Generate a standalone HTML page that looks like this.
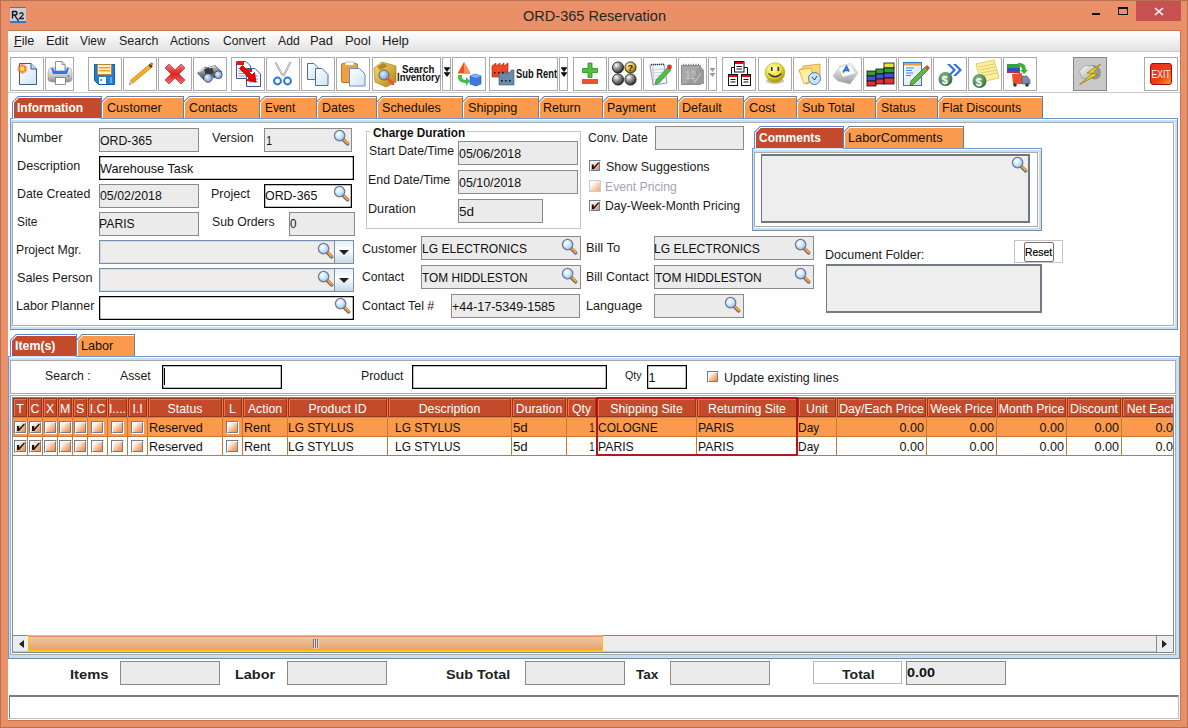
<!DOCTYPE html><html><head><meta charset="utf-8"><style>
*{margin:0;padding:0;box-sizing:border-box}
html,body{width:1188px;height:728px;overflow:hidden;background:#E99069;font-family:"Liberation Sans",sans-serif;font-size:12px;color:#000}
.a{position:absolute}
.t{position:absolute;white-space:nowrap;line-height:1}
.tb{position:absolute;top:57px;height:34px;border:1px solid #ABABAB;background:#fff}
.tab{position:absolute;background:#FB9A4C;border:1px solid #7196CF;border-bottom:none;color:#000;white-space:nowrap;clip-path:polygon(5px 0,100% 0,100% 100%,0 100%,0 5px)}
.tab.sel{background:#C34B2C;color:#fff}
.hc{position:absolute;background:#C34B2C;border:1px solid #F0713F;border-right-color:#9A3A20;border-bottom-color:#9A3A20}
.cb{position:absolute;width:12px;height:12px;border:1px solid #5E6D80;border-right-color:#8C9AAB;border-bottom-color:#8C9AAB;background:linear-gradient(135deg,#FFFFFF 0%,#FCE3CF 35%,#F3A46A 100%)}
.cbd{border-color:#B9CDE6;background:linear-gradient(135deg,#FFFFFF 0%,#FBE6D6 35%,#F2B48A 100%)}
</style></head><body>
<div class="a" style="left:0px;top:0px;width:1188px;height:728px;background:#E99069;border:1px solid #B9704F"></div>
<div class="t" style="left:522.73px;top:8.91px;font-size:14.8px;color:#262626;transform:scaleX(0.9824);transform-origin:0.67px 0;">ORD-365 Reservation</div>
<div class="a" style="left:1092px;top:13px;width:8px;height:2px;background:#111"></div>
<div class="a" style="left:1118px;top:7px;width:10px;height:8px;border:1px solid #111;border-top-width:2px"></div>
<div class="a" style="left:1136px;top:1px;width:45px;height:20px;background:#C75050"></div>
<svg class="a" style="left:1154px;top:7px" width="10" height="9"><path d="M1 1L9 8M9 1L1 8" stroke="#fff" stroke-width="1.6"/></svg>
<div class="a" style="left:10px;top:7px;width:16px;height:16px;background:linear-gradient(#3A74C6 0,#3A74C6 1px,#C9CED6 1px,#C9CED6 14px,#3A74C6 14px)"></div>
<svg class="a" style="left:10px;top:7px" width="16" height="16" viewBox="0 0 16 16"><path d="M2.5 4V11.5M2.5 4.5H5Q7 4.5 7 6.3Q7 8 5 8H2.5M4.5 8L8.5 14" stroke="#111" stroke-width="1.3" fill="none"/><path d="M9.5 7Q10.5 5.5 12 5.8Q13.6 6.3 12.8 8.2L9.5 11.5H14" stroke="#222" stroke-width="1.3" fill="none"/></svg>
<div class="a" style="left:8px;top:30px;width:1173px;height:691px;background:#fff;border:1px solid #C8774F;border-left:none"></div>
<div class="a" style="left:8px;top:31px;width:1172px;height:20px;background:linear-gradient(#FFFFFF,#E2E2E2)"></div>
<div class="a" style="left:8px;top:51px;width:1172px;height:1px;background:#CACACA"></div>
<div class="t" style="left:13.84px;top:35.44px;font-size:12.0px;color:#1a1a1a;transform:scaleX(1.0550);transform-origin:0.96px 0;"><u>F</u>ile</div>
<div class="t" style="left:46.04px;top:35.44px;font-size:12.0px;color:#1a1a1a;transform:scaleX(1.0805);transform-origin:0.96px 0;">Edit</div>
<div class="t" style="left:79.84px;top:35.44px;font-size:12.0px;color:#1a1a1a;transform:scaleX(0.9868);transform-origin:0.06px 0;">View</div>
<div class="t" style="left:118.56px;top:35.44px;font-size:12.0px;color:#1a1a1a;transform:scaleX(1.0393);transform-origin:0.54px 0;">Search</div>
<div class="t" style="left:170.00px;top:35.44px;font-size:12.0px;color:#1a1a1a;transform:scaleX(1.0067);transform-origin:0.00px 0;">Actions</div>
<div class="t" style="left:222.70px;top:35.44px;font-size:12.0px;color:#1a1a1a;transform:scaleX(1.0087);transform-origin:0.60px 0;">Convert</div>
<div class="t" style="left:277.70px;top:35.44px;font-size:12.0px;color:#1a1a1a;transform:scaleX(1.0155);transform-origin:0.00px 0;">Add</div>
<div class="t" style="left:310.04px;top:35.44px;font-size:12.0px;color:#1a1a1a;transform:scaleX(1.0805);transform-origin:0.96px 0;">Pad</div>
<div class="t" style="left:345.34px;top:35.44px;font-size:12.0px;color:#1a1a1a;transform:scaleX(1.0782);transform-origin:0.96px 0;">Pool</div>
<div class="t" style="left:381.74px;top:35.44px;font-size:12.0px;color:#1a1a1a;transform:scaleX(1.0939);transform-origin:0.96px 0;">Help</div>
<div class="tb" style="left:10px;width:34px;"></div>
<div class="tb" style="left:45px;width:29px;"></div>
<div class="tb" style="left:88px;width:34px;"></div>
<div class="tb" style="left:123px;width:34px;"></div>
<div class="tb" style="left:158px;width:34px;"></div>
<div class="tb" style="left:193px;width:34px;"></div>
<div class="tb" style="left:231px;width:34px;"></div>
<div class="tb" style="left:266px;width:34px;"></div>
<div class="tb" style="left:301px;width:34px;"></div>
<div class="tb" style="left:336px;width:34px;"></div>
<div class="tb" style="left:372px;width:69px;"></div>
<div class="tb" style="left:442px;width:9px;"></div>
<div class="tb" style="left:452px;width:34px;"></div>
<div class="tb" style="left:489px;width:69px;"></div>
<div class="tb" style="left:559px;width:9px;"></div>
<div class="tb" style="left:573px;width:34px;"></div>
<div class="tb" style="left:608px;width:34px;"></div>
<div class="tb" style="left:643px;width:34px;"></div>
<div class="tb" style="left:678px;width:29px;"></div>
<div class="tb" style="left:708px;width:9px;"></div>
<div class="tb" style="left:722px;width:34px;"></div>
<div class="tb" style="left:758px;width:34px;"></div>
<div class="tb" style="left:793px;width:34px;"></div>
<div class="tb" style="left:828px;width:34px;"></div>
<div class="tb" style="left:863px;width:34px;"></div>
<div class="tb" style="left:898px;width:34px;"></div>
<div class="tb" style="left:933px;width:34px;"></div>
<div class="tb" style="left:968px;width:34px;"></div>
<div class="tb" style="left:1003px;width:34px;"></div>
<div class="tb" style="left:1073px;width:34px;background:#C9C9C9;border-color:#858585;"></div>
<div class="tb" style="left:1144px;width:34px;"></div>

<svg class="a" style="left:0;top:50px" width="1188" height="45" viewBox="0 50 1188 45">
<defs>
<linearGradient id="pg" x1="0" y1="0" x2="1" y2="1"><stop offset="0" stop-color="#FFFFFF"/><stop offset="1" stop-color="#CFE3F5"/></linearGradient>
<radialGradient id="star" cx="0.5" cy="0.5" r="0.5"><stop offset="0" stop-color="#FFE860"/><stop offset="0.45" stop-color="#FF9A20"/><stop offset="1" stop-color="#FF3010" stop-opacity="0.2"/></radialGradient>
<linearGradient id="prn" x1="0" y1="0" x2="0" y2="1"><stop offset="0" stop-color="#FAFAFA"/><stop offset="0.6" stop-color="#C8C8C8"/><stop offset="1" stop-color="#8A8A8A"/></linearGradient>
<linearGradient id="redx" x1="0" y1="0" x2="0" y2="1"><stop offset="0" stop-color="#F08080"/><stop offset="0.5" stop-color="#E02020"/><stop offset="1" stop-color="#F07070"/></linearGradient>
<radialGradient id="ball" cx="0.35" cy="0.3" r="0.7"><stop offset="0" stop-color="#FFFFFF"/><stop offset="0.4" stop-color="#A0A0A0"/><stop offset="1" stop-color="#303030"/></radialGradient>
<radialGradient id="yball" cx="0.35" cy="0.3" r="0.7"><stop offset="0" stop-color="#FFFBD0"/><stop offset="0.5" stop-color="#F2C230"/><stop offset="1" stop-color="#8A6A10"/></radialGradient>
<radialGradient id="smile" cx="0.4" cy="0.3" r="0.75"><stop offset="0" stop-color="#FFFFC0"/><stop offset="0.5" stop-color="#F0E040"/><stop offset="1" stop-color="#A08A00"/></radialGradient>
<radialGradient id="lens" cx="0.4" cy="0.4" r="0.6"><stop offset="0" stop-color="#E0F4FF"/><stop offset="1" stop-color="#6A9AD8"/></radialGradient>
<linearGradient id="bino" x1="0" y1="0" x2="0" y2="1"><stop offset="0" stop-color="#C8C8C8"/><stop offset="1" stop-color="#404040"/></linearGradient>
<linearGradient id="gold" x1="0" y1="0" x2="1" y2="1"><stop offset="0" stop-color="#FFE070"/><stop offset="1" stop-color="#B08010"/></linearGradient>
<linearGradient id="exit" x1="0" y1="0" x2="1" y2="1"><stop offset="0" stop-color="#E83020"/><stop offset="0.6" stop-color="#F04010"/><stop offset="1" stop-color="#FFA030"/></linearGradient>
<linearGradient id="key" x1="0" y1="0" x2="0" y2="1"><stop offset="0" stop-color="#FFFFFF"/><stop offset="1" stop-color="#9A9A9A"/></linearGradient>
<radialGradient id="dollar" cx="0.4" cy="0.35" r="0.7"><stop offset="0" stop-color="#90C090"/><stop offset="1" stop-color="#2E6A3A"/></radialGradient>
<linearGradient id="cloud" x1="0" y1="0" x2="1" y2="1"><stop offset="0" stop-color="#FFFFFF"/><stop offset="1" stop-color="#A0A0A0"/></linearGradient>
</defs>
<!-- 1 new -->
<path d="M19.5 63.5H31L36.5 69V84.5H19.5Z" fill="url(#pg)" stroke="#3A5A90"/>
<path d="M31 63.5V69H36.5" fill="#BFD8EE" stroke="#3A5A90"/>
<circle cx="22.3" cy="68.8" r="5.2" fill="url(#star)"/>
<path d="M22.3 63.8L23.3 67.3L26.8 66.3L24.3 68.8L26.8 71.3L23.3 70.3L22.3 73.8L21.3 70.3L17.8 71.3L20.3 68.8L17.8 66.3L21.3 67.3Z" fill="#FF5A1A" opacity="0.8"/>
<circle cx="22.3" cy="68.8" r="2.2" fill="#FFF060"/>
<!-- 2 printer -->
<path d="M48 72Q48 68 52 67H68Q72 68 72 72V79Q72 82 67 82H53Q48 82 48 79Z" fill="url(#prn)" stroke="#8A8A8A" stroke-width="0.5"/>
<path d="M51 68H69L67 74H53Z" fill="#2E78E8"/>
<path d="M53 68H67L66 71H54Z" fill="#9EC4F8"/>
<path d="M55.5 61.5H62L65 64.5V71H55.5Z" fill="#fff" stroke="#777" stroke-width="0.8"/>
<path d="M62 61.5V64.5H65" fill="none" stroke="#777" stroke-width="0.8"/>
<rect x="55.5" y="77.5" width="10" height="7" fill="#fff" stroke="#777" stroke-width="0.8"/>
<circle cx="68.5" cy="76" r="1" fill="#20B040"/>
<!-- 3 save -->
<path d="M94 64H115V84H98L94 80Z" fill="#1E7FD6"/>
<path d="M94.5 64.5H114.5V84.5H98.5L94.5 80.5Z" fill="none" stroke="#1060B0"/>
<rect x="97.5" y="64.5" width="14" height="10" fill="#FFF3C8" stroke="#C08040"/>
<rect x="99" y="67" width="11" height="1.5" fill="#F0A030"/>
<rect x="99" y="70" width="11" height="1.5" fill="#F0A030"/>
<rect x="99" y="77" width="7" height="7" fill="#fff"/>
<rect x="100.5" y="79" width="1.5" height="2" fill="#1E7FD6"/>
<rect x="110" y="77" width="2" height="6" fill="#60B0F0"/>
<!-- 4 pencil -->
<path d="M131 80L150 64L152.5 66.5L133.5 82.5Z" fill="#F8B020" stroke="#C07010" stroke-width="0.7"/>
<path d="M131 80L133.5 82.5L129 85Z" fill="#F0D0A0" stroke="#806040" stroke-width="0.5"/>
<path d="M148.5 65.2L150 64L152.5 66.5L151 67.8Z" fill="#303030"/>
<circle cx="151.5" cy="64" r="1.6" fill="#F06030"/>
<path d="M131 80L128 84L136 70Z" fill="#ccc" opacity="0.35"/>
<!-- 5 red x -->
<path d="M165 68L169 64L175 70L181 64L185 68L179 74L185 80L181 84L175 78L169 84L165 80L171 74Z" fill="url(#redx)" stroke="#C04040" stroke-width="0.8"/>
<!-- 6 binoculars -->
<path d="M197.5 73L205 67L211 69.5L204 80Z" fill="url(#bino)" stroke="#333" stroke-width="0.6"/>
<path d="M207 68L215 65.5L222 72L214 78Z" fill="url(#bino)" stroke="#333" stroke-width="0.6"/>
<path d="M204 69L212 67L214 73L206 76Z" fill="#3A3A3A"/>
<path d="M199 72L205 68" stroke="#E8E8E8" stroke-width="1.2"/>
<path d="M209 68L215 66.5" stroke="#E8E8E8" stroke-width="1.2"/>
<circle cx="208" cy="78" r="4.3" fill="url(#lens)" stroke="#444" stroke-width="0.8"/>
<circle cx="218.3" cy="74.8" r="3.9" fill="url(#lens)" stroke="#444" stroke-width="0.8"/>
<!-- 7 doc arrow -->
<path d="M236.5 61.5H246L250.5 66V78.5H236.5Z" fill="#fff" stroke="#3C58A0"/>
<rect x="237" y="62" width="7" height="3" fill="#F01010"/>
<path d="M238.5 68.5H245M238.5 71H246M238.5 73.5H244M238.5 76H246" stroke="#5C78C0" stroke-width="0.8"/>
<path d="M246.5 68.5H255L260.5 74V86.5H246.5Z" fill="#fff" stroke="#3C58A0"/>
<rect x="247" y="69" width="5" height="3" fill="#F01010"/>
<path d="M249 76H258M249 79H258M249 82H258" stroke="#5C78C0" stroke-width="0.8"/>
<path d="M239.5 68.5L242.5 65.5L252 75L254.5 72.5L256 82L246.5 80.5L249 78Z" fill="#F00000" stroke="#8A0000" stroke-width="0.7"/>
<!-- 8 scissors -->
<path d="M275.5 62.5L283 76M290.5 62L283.5 76" fill="none" stroke="#9A9A9A" stroke-width="2"/>
<path d="M275.5 62.5L283 76M290.5 62L283.5 76" fill="none" stroke="#F8F8F8" stroke-width="0.7"/>
<circle cx="277.5" cy="81" r="3.4" fill="none" stroke="#2A78D8" stroke-width="2"/>
<circle cx="287.5" cy="81" r="3.4" fill="none" stroke="#2A78D8" stroke-width="2"/>
<!-- 9 copy -->
<path d="M307.5 63.5H314L318 67.5V79.5H307.5Z" fill="url(#pg)" stroke="#4A6AA8"/>
<path d="M315.5 68.5H322L328 74.5V85.5H315.5Z" fill="url(#pg)" stroke="#4A6AA8"/>
<!-- 10 paste -->
<rect x="341.5" y="63.5" width="16" height="19" rx="1.5" fill="#F0A040" stroke="#C07820"/>
<rect x="345" y="62" width="9" height="3.5" fill="#fff" stroke="#999" stroke-width="0.6"/>
<path d="M349.5 68.5H359.5L365 74V86H349.5Z" fill="url(#pg)" stroke="#6A8AC8"/>
<!-- 11 search inventory -->
<path d="M374 68L382 62L396 66V82L386 87L375 82Z" fill="url(#gold)" stroke="#A07010" stroke-width="0.6"/>
<path d="M377 67L383 63L388 66L380 70Z" fill="#8A6010" opacity="0.6"/>
<circle cx="384" cy="75" r="5" fill="url(#lens)" stroke="#666" stroke-width="1"/>
<path d="M387.5 78.5L393 84" stroke="#E85050" stroke-width="2.5" stroke-linecap="round"/>
<text x="402" y="72.5" font-family="Liberation Sans" font-weight="bold" font-size="11" fill="#111" textLength="32.3" lengthAdjust="spacingAndGlyphs">Search</text>
<text x="397" y="81.3" font-family="Liberation Sans" font-weight="bold" font-size="11" fill="#111" textLength="43" lengthAdjust="spacingAndGlyphs">Inventory</text>
<!-- dropdowns -->
<path d="M444 68H450L447 72ZM444 73H450L447 77Z" fill="#111"/>
<path d="M444 67.5H450M444 72.5H450" stroke="#111" stroke-width="0.8"/>
<path d="M561 68H567L564 72ZM561 73H567L564 77Z" fill="#111"/>
<path d="M561 67.5H567M561 72.5H567" stroke="#111" stroke-width="0.8"/>
<path d="M709.5 68H715.5L712.5 72ZM709.5 73H715.5L712.5 77Z" fill="#999"/>
<!-- 13 shapes -->
<path d="M464 62L457.5 73.5H470.5Z" fill="#F05020"/>
<path d="M464 62L464 73.5H470.5Z" fill="#FF9060"/>
<path d="M458 75Q457 83 466 83L466 86L470 81L466 77L466 80Q461 80 462 75Z" fill="#40C040"/>
<path d="M470 76L475 74L481 76V84L476 86L470 84Z" fill="#3C7CE0" stroke="#2050A0" stroke-width="0.6"/>
<path d="M470 76L475 74L481 76L476 78Z" fill="#80B0F0"/>
<!-- 14 sub rent -->
<path d="M492 77V66L496 63V66L500 63V66L504 63V66L508 63V77Z" fill="#F04820" stroke="#A02000" stroke-width="0.6"/>
<path d="M499 85V74L503 71V74L507 71V74L511 71V70H514V85Z" fill="#6A8AA8" stroke="#3A5A78" stroke-width="0.6"/>
<rect x="494" y="72" width="1.5" height="1.5" fill="#111"/><rect x="498" y="72" width="1.5" height="1.5" fill="#111"/><rect x="502" y="72" width="1.5" height="1.5" fill="#111"/>
<rect x="501" y="80" width="1.5" height="1.5" fill="#111"/><rect x="505" y="80" width="1.5" height="1.5" fill="#111"/><rect x="509" y="80" width="1.5" height="1.5" fill="#111"/>
<text x="516" y="77.5" font-family="Liberation Sans" font-weight="bold" font-size="12" fill="#111" textLength="41" lengthAdjust="spacingAndGlyphs">Sub Rent</text>
<!-- 16 plus minus -->
<path d="M588 63H592V68.5H597.5V72.5H592V77.5H588V72.5H582.5V68.5H588Z" fill="#50C040" stroke="#2A8A20" stroke-width="0.8"/>
<rect x="582" y="79" width="16" height="5" fill="#F05030"/>
<!-- 17 balls -->
<circle cx="618" cy="67.5" r="5.6" fill="url(#ball)" stroke="#111" stroke-width="0.8"/>
<circle cx="630.5" cy="67.5" r="5.6" fill="url(#yball)" stroke="#111" stroke-width="0.8"/>
<text x="627.5" y="71" font-family="Liberation Sans" font-weight="bold" font-size="9" fill="#111">?</text>
<circle cx="618" cy="79.5" r="5.6" fill="url(#ball)" stroke="#111" stroke-width="0.8"/>
<circle cx="630.5" cy="79.5" r="5.6" fill="url(#ball)" stroke="#111" stroke-width="0.8"/>
<!-- 18 notepad -->
<path d="M650 65L664 64L667 83L653 85Z" fill="#F4F8FF" stroke="#6A7AC8" stroke-width="0.8"/>
<path d="M652 70L665 69M652.5 73L665.5 72M653 76L666 75M653.5 79L666.5 78" stroke="#A0B8E8" stroke-width="0.6"/>
<path d="M653 66V84" stroke="#F08080" stroke-width="0.6"/>
<path d="M651 64.5H665" stroke="#333" stroke-width="1.5" stroke-dasharray="1 1"/>
<path d="M656 80L668 67L671 70L659 83L655 84Z" fill="#50C040" stroke="#2A7A20" stroke-width="0.6"/>
<circle cx="669.5" cy="67" r="2.4" fill="#E03020"/>
<!-- 19 calendar grey -->
<path d="M681.5 65.5H700.5V84.5H681.5Z" fill="#A8A8A8" stroke="#8A8A8A"/>
<path d="M686 84L704 84V70L700 66" fill="#9A9A9A"/>
<path d="M683 64.5H699" stroke="#777" stroke-width="1.5" stroke-dasharray="1 1.5"/>
<text x="685" y="79" font-family="Liberation Sans" font-size="10" fill="#C8C8C8">12</text>
<path d="M692 78L695 82L701 73" stroke="#C0C0C0" stroke-width="1.2" fill="none"/>
<!-- 21 hierarchy -->
<path d="M735 67.5H731.5V75M744 67.5H747.5V75" stroke="#111" fill="none"/>
<rect x="734.5" y="61.5" width="9.5" height="10.5" fill="#fff" stroke="#111"/>
<rect x="735" y="62" width="8.5" height="2" fill="#E00"/>
<path d="M736.5 66.5H742M736.5 69H742" stroke="#111"/>
<rect x="728.5" y="74.5" width="9" height="11" fill="#fff" stroke="#111"/>
<rect x="729" y="75" width="8" height="2" fill="#E00"/>
<path d="M730.5 79.5H735.5M730.5 82H735.5" stroke="#111"/>
<rect x="741.5" y="74.5" width="9" height="11" fill="#fff" stroke="#111"/>
<rect x="742" y="75" width="8" height="2" fill="#E00"/>
<path d="M743.5 79.5H748.5M743.5 82H748.5" stroke="#111"/>
<!-- 22 smiley -->
<ellipse cx="775" cy="81" rx="9" ry="3" fill="#6A5A20" opacity="0.35"/>
<circle cx="775" cy="72.5" r="9.8" fill="url(#smile)" stroke="#B0A020" stroke-width="0.6"/>
<rect x="771" y="67" width="1.6" height="4" fill="#333"/>
<rect x="777.5" y="67" width="1.6" height="4" fill="#333"/>
<path d="M768.5 73.5Q775 80 781.5 73.5" stroke="#333" stroke-width="1.3" fill="none"/>
<!-- 23 folder clock -->
<path d="M799 70L803 68V66L812 65L820 64V79L806 84Z" fill="#F8D870" stroke="#D09020" stroke-width="0.7"/>
<path d="M799 70L811 68L814 80L804 84Z" fill="#FFF0A0" stroke="#D09020" stroke-width="0.6"/>
<circle cx="814.5" cy="78.5" r="6" fill="#C8E4FF" stroke="#4A7AB8" stroke-width="1"/>
<path d="M812 77L814.5 80L817 76" stroke="#333" stroke-width="0.9" fill="none"/>
<!-- 24 key -->
<path d="M833 76L840 66L851 63.5L858 73L850 84L838 81Z" fill="url(#key)" stroke="#B8B8B8" stroke-width="0.6"/>
<path d="M838.5 68L850 65L855.5 73L843 77Z" fill="#FDFDFD" stroke="#D8D8D8" stroke-width="0.5"/>
<path d="M843 72.5L846.5 66.5L849 71.5M844.3 70.3H848" stroke="#1E6EE0" stroke-width="1.7" fill="none"/>
<!-- 25 cubes -->
<g stroke="#111" stroke-width="0.8">
<rect x="867" y="71" width="9" height="5" fill="#30A030"/><rect x="867" y="76" width="9" height="5" fill="#4050E0"/><rect x="867" y="81" width="9" height="5" fill="#E03030"/>
<rect x="876" y="69" width="8" height="5" fill="#30A030"/><rect x="876" y="74" width="8" height="5" fill="#4050E0"/><rect x="876" y="79" width="8" height="5" fill="#E03030"/>
<rect x="884" y="63" width="10" height="5" fill="#E8E040"/><rect x="884" y="68" width="10" height="5" fill="#30A030"/><rect x="884" y="73" width="10" height="5" fill="#4050E0"/><rect x="884" y="78" width="10" height="6" fill="#E03030"/>
</g>
<!-- 26 edit doc -->
<rect x="903.5" y="62.5" width="18" height="23" fill="url(#pg)" stroke="#2A78D0"/>
<rect x="904" y="63" width="17" height="2.5" fill="#F0A030"/>
<path d="M906 68H914M906 70.5H912M906 73H913M906 75.5H911" stroke="#2A78D0" stroke-width="0.9"/>
<path d="M911 81L925 67L928 70L914 84L910 85Z" fill="#60B848" stroke="#2A6A20" stroke-width="0.7"/>
<path d="M925 67L927 65L930 68L928 70Z" fill="#E04030"/>
<!-- 27 $ arrows -->
<path d="M947 64L953 70L947 76L950 76L956 70L950 64ZM953 64L959 70L953 76L956 76L962 70L956 64Z" fill="#2A70E0"/>
<circle cx="945.5" cy="79" r="7" fill="url(#dollar)"/>
<text x="941.8" y="83.5" font-family="Liberation Sans" font-weight="bold" font-size="11" fill="#fff">$</text>
<!-- 28 $ note -->
<path d="M976 64L994 60L999 78L981 82Z" fill="#FFF0A0" stroke="#E0C040" stroke-width="0.8"/>
<path d="M979 67L994 64M980 70L995 67M981 73L996 70M982 76L997 73" stroke="#D8C060" stroke-width="0.8"/>
<circle cx="979.5" cy="81" r="7" fill="url(#dollar)"/>
<text x="975.8" y="85.5" font-family="Liberation Sans" font-weight="bold" font-size="11" fill="#fff">$</text>
<!-- 29 truck -->
<rect x="1007" y="64" width="13" height="4" fill="#30A040"/><rect x="1007" y="68" width="13" height="3" fill="#3050C0"/><rect x="1007" y="71" width="13" height="2" fill="#C03030"/>
<path d="M1018 63Q1026 62 1026 70L1028 70L1024 74L1020 70L1022 70Q1022 66 1018 66Z" fill="#40B030"/>
<path d="M1012 74L1022 73V84H1013Z" fill="#E85030"/>
<path d="M1022 76H1027L1030 80V84H1022Z" fill="#7A8AB0" stroke="#445" stroke-width="0.5"/>
<circle cx="1015" cy="85" r="1.8" fill="#333"/><circle cx="1027" cy="85" r="1.8" fill="#333"/>
<!-- 30 lightning -->
<path d="M1089 68Q1093 64 1097 67Q1101 69 1100 74Q1100 79 1094 79L1090 77Z" fill="#9A9A9A" stroke="#6A6A6A" stroke-width="0.6"/>
<path d="M1081 75Q1078 71 1082 68.5Q1084 64.5 1089 66Q1094 64 1095 69Q1097 73 1093 76Q1090 80 1085 79Q1081 79 1081 75Z" fill="url(#cloud)" stroke="#8A8A8A" stroke-width="0.6"/>
<path d="M1100.5 64L1087 73L1093 73.5L1079.5 84.5L1098 74.5L1092.5 73.5Z" fill="#F6D21E" stroke="#8A7000" stroke-width="0.7" stroke-linejoin="round"/>
<!-- 31 exit -->
<rect x="1150.5" y="63.5" width="21" height="21" rx="2.5" fill="url(#exit)" stroke="#A01010"/>
<text x="1151.5" y="78" font-family="Liberation Sans" font-size="10" fill="#fff" textLength="19" lengthAdjust="spacingAndGlyphs">EXIT</text>
</svg>

<div class="a" style="left:8px;top:92px;width:1172px;height:1px;background:#C9C9C9"></div>
<div class="a" style="left:10px;top:118px;width:1168px;height:212px;border:1px solid #7196CF;border-right-color:#7B8B9F;border-bottom-color:#7B8B9F;background:#C7DFF4"></div>
<div class="a" style="left:11px;top:119px;width:1166px;height:1px;background:#fff"></div>
<div class="a" style="left:12px;top:122px;width:1163px;height:205px;background:#fff"></div>
<div class="a" style="left:12px;top:122px;width:1162px;height:204px;border:1px solid #ABABAB"></div>
<svg class="a" style="left:11px;top:95px" width="1033" height="24" viewBox="11 95 1033 24"><path d="M101 118V102L107 96H184V118Z" fill="#6B7E96"/><path d="M102 118V102.4L107.4 97H183V118Z" fill="#FFFFFF"/><path d="M103 118V102.8L107.8 98H183V118Z" fill="#FB9A4C"/><path d="M183 118V102L189 96H260V118Z" fill="#6B7E96"/><path d="M184 118V102.4L189.4 97H259V118Z" fill="#FFFFFF"/><path d="M185 118V102.8L189.8 98H259V118Z" fill="#FB9A4C"/><path d="M259 118V102L265 96H317V118Z" fill="#6B7E96"/><path d="M260 118V102.4L265.4 97H316V118Z" fill="#FFFFFF"/><path d="M261 118V102.8L265.8 98H316V118Z" fill="#FB9A4C"/><path d="M316 118V102L322 96H377V118Z" fill="#6B7E96"/><path d="M317 118V102.4L322.4 97H376V118Z" fill="#FFFFFF"/><path d="M318 118V102.8L322.8 98H376V118Z" fill="#FB9A4C"/><path d="M376 118V102L382 96H463V118Z" fill="#6B7E96"/><path d="M377 118V102.4L382.4 97H462V118Z" fill="#FFFFFF"/><path d="M378 118V102.8L382.8 98H462V118Z" fill="#FB9A4C"/><path d="M462 118V102L468 96H539V118Z" fill="#6B7E96"/><path d="M463 118V102.4L468.4 97H538V118Z" fill="#FFFFFF"/><path d="M464 118V102.8L468.8 98H538V118Z" fill="#FB9A4C"/><path d="M538 118V102L544 96H603V118Z" fill="#6B7E96"/><path d="M539 118V102.4L544.4 97H602V118Z" fill="#FFFFFF"/><path d="M540 118V102.8L544.8 98H602V118Z" fill="#FB9A4C"/><path d="M602 118V102L608 96H678V118Z" fill="#6B7E96"/><path d="M603 118V102.4L608.4 97H677V118Z" fill="#FFFFFF"/><path d="M604 118V102.8L608.8 98H677V118Z" fill="#FB9A4C"/><path d="M677 118V102L683 96H744V118Z" fill="#6B7E96"/><path d="M678 118V102.4L683.4 97H743V118Z" fill="#FFFFFF"/><path d="M679 118V102.8L683.8 98H743V118Z" fill="#FB9A4C"/><path d="M743 118V102L749 96H797V118Z" fill="#6B7E96"/><path d="M744 118V102.4L749.4 97H796V118Z" fill="#FFFFFF"/><path d="M745 118V102.8L749.8 98H796V118Z" fill="#FB9A4C"/><path d="M796 118V102L802 96H876V118Z" fill="#6B7E96"/><path d="M797 118V102.4L802.4 97H875V118Z" fill="#FFFFFF"/><path d="M798 118V102.8L802.8 98H875V118Z" fill="#FB9A4C"/><path d="M875 118V102L881 96H938V118Z" fill="#6B7E96"/><path d="M876 118V102.4L881.4 97H937V118Z" fill="#FFFFFF"/><path d="M877 118V102.8L881.8 98H937V118Z" fill="#FB9A4C"/><path d="M937 118V102L943 96H1043V118Z" fill="#6B7E96"/><path d="M938 118V102.4L943.4 97H1042V118Z" fill="#FFFFFF"/><path d="M939 118V102.8L943.8 98H1042V118Z" fill="#FB9A4C"/><path d="M12 118V102L18 96H102V118Z" fill="#5A82D2"/><path d="M13 118V102.4L18.4 97H101V118Z" fill="#FFFFFF"/><path d="M14 118V102.8L18.8 98H101V118Z" fill="#C34B2C"/><rect x="13" y="118" width="88" height="1" fill="#C7DFF4"/></svg>
<div class="t" style="left:16.90px;top:102.17px;font-size:12.3px;color:#fff;font-weight:bold;transform:scaleX(0.9771);transform-origin:0.80px 0;">Information</div>
<div class="t" style="left:107.27px;top:101.90px;font-size:12.6px;color:#111;transform:scaleX(1.0011);transform-origin:0.63px 0;">Customer</div>
<div class="t" style="left:189.17px;top:101.90px;font-size:12.6px;color:#111;transform:scaleX(0.9746);transform-origin:0.63px 0;">Contacts</div>
<div class="t" style="left:264.89px;top:101.90px;font-size:12.6px;color:#111;transform:scaleX(0.9350);transform-origin:1.01px 0;">Event</div>
<div class="t" style="left:321.79px;top:101.90px;font-size:12.6px;color:#111;transform:scaleX(0.9893);transform-origin:1.01px 0;">Dates</div>
<div class="t" style="left:382.03px;top:101.90px;font-size:12.6px;color:#111;transform:scaleX(0.9994);transform-origin:0.57px 0;">Schedules</div>
<div class="t" style="left:467.93px;top:101.90px;font-size:12.6px;color:#111;transform:scaleX(1.0078);transform-origin:0.57px 0;">Shipping</div>
<div class="t" style="left:543.19px;top:101.90px;font-size:12.6px;color:#111;transform:scaleX(0.9980);transform-origin:1.01px 0;">Return</div>
<div class="t" style="left:607.39px;top:101.90px;font-size:12.6px;color:#111;transform:scaleX(0.9808);transform-origin:1.01px 0;">Payment</div>
<div class="t" style="left:682.29px;top:101.90px;font-size:12.6px;color:#111;transform:scaleX(0.9972);transform-origin:1.01px 0;">Default</div>
<div class="t" style="left:748.87px;top:101.90px;font-size:12.6px;color:#111;transform:scaleX(1.0159);transform-origin:0.63px 0;">Cost</div>
<div class="t" style="left:801.83px;top:101.90px;font-size:12.6px;color:#111;transform:scaleX(1.0039);transform-origin:0.57px 0;">Sub Total</div>
<div class="t" style="left:880.73px;top:101.90px;font-size:12.6px;color:#111;transform:scaleX(0.9708);transform-origin:0.57px 0;">Status</div>
<div class="t" style="left:942.39px;top:101.90px;font-size:12.6px;color:#111;transform:scaleX(0.9927);transform-origin:1.01px 0;">Flat Discounts</div>
<div class="t" style="left:16.58px;top:131.81px;font-size:12.7px;color:#1a1a1a;transform:scaleX(1.0081);transform-origin:1.02px 0;">Number</div>
<div class="a" style="left:99px;top:128px;width:100px;height:24px;background:#EBEBEB;border:1px solid #8A8A8A"></div>
<div class="t" style="left:99.83px;top:134.81px;font-size:12.7px;color:#111;transform:scaleX(0.9700);transform-origin:0.57px 0;">ORD-365</div>
<div class="t" style="left:212.34px;top:131.81px;font-size:12.7px;color:#1a1a1a;transform:scaleX(0.9840);transform-origin:0.06px 0;">Version</div>
<div class="a" style="left:264px;top:128px;width:88px;height:24px;background:#EBEBEB;border:1px solid #8A8A8A"></div>
<div class="t" style="left:265.55px;top:134.81px;font-size:12.7px;color:#111;transform:scaleX(0.8146);transform-origin:0.95px 0;">1</div>
<svg class="a" style="left:333px;top:129px" width="17" height="17" viewBox="0 0 17 17"><defs><radialGradient id="mg1" cx="0.38" cy="0.35" r="0.75"><stop offset="0" stop-color="#FFFFFF"/><stop offset="0.35" stop-color="#D8F2FF"/><stop offset="1" stop-color="#86BEE6"/></radialGradient></defs><path d="M10 10.2L14.6 14.8" stroke="#5E5A78" stroke-width="3.6" stroke-linecap="round"/><path d="M10.4 10L14.8 14.4" stroke="#F6A43A" stroke-width="2.2" stroke-linecap="round"/><circle cx="6.6" cy="6.6" r="5.2" fill="url(#mg1)" stroke="#77759A" stroke-width="1.3"/></svg>
<div class="t" style="left:16.58px;top:159.81px;font-size:12.7px;color:#1a1a1a;transform:scaleX(0.9958);transform-origin:1.02px 0;">Description</div>
<div class="a" style="left:99px;top:156px;width:255px;height:24px;background:#fff;border:1px solid #000;box-shadow:inset 0 0 0 0.25px #000"></div>
<div class="t" style="left:100.34px;top:162.81px;font-size:12.7px;color:#111;transform:scaleX(0.9952);transform-origin:0.06px 0;">Warehouse Task</div>
<div class="t" style="left:16.58px;top:187.81px;font-size:12.7px;color:#1a1a1a;transform:scaleX(0.9707);transform-origin:1.02px 0;">Date Created</div>
<div class="a" style="left:99px;top:184px;width:100px;height:24px;background:#EBEBEB;border:1px solid #8A8A8A"></div>
<div class="t" style="left:99.89px;top:189.81px;font-size:12.7px;color:#111;transform:scaleX(0.9721);transform-origin:0.51px 0;">05/02/2018</div>
<div class="t" style="left:211.38px;top:187.81px;font-size:12.7px;color:#1a1a1a;transform:scaleX(0.9839);transform-origin:1.02px 0;">Project</div>
<div class="a" style="left:264px;top:184px;width:88px;height:24px;background:#fff;border:1px solid #000;box-shadow:inset 0 0 0 0.25px #000"></div>
<div class="t" style="left:264.73px;top:189.81px;font-size:12.7px;color:#111;transform:scaleX(0.9757);transform-origin:0.57px 0;">ORD-365</div>
<svg class="a" style="left:333px;top:185px" width="17" height="17" viewBox="0 0 17 17"><defs><radialGradient id="mg2" cx="0.38" cy="0.35" r="0.75"><stop offset="0" stop-color="#FFFFFF"/><stop offset="0.35" stop-color="#D8F2FF"/><stop offset="1" stop-color="#86BEE6"/></radialGradient></defs><path d="M10 10.2L14.6 14.8" stroke="#5E5A78" stroke-width="3.6" stroke-linecap="round"/><path d="M10.4 10L14.8 14.4" stroke="#F6A43A" stroke-width="2.2" stroke-linecap="round"/><circle cx="6.6" cy="6.6" r="5.2" fill="url(#mg2)" stroke="#77759A" stroke-width="1.3"/></svg>
<div class="t" style="left:17.03px;top:215.81px;font-size:12.7px;color:#1a1a1a;transform:scaleX(0.9323);transform-origin:0.57px 0;">Site</div>
<div class="a" style="left:99px;top:212px;width:100px;height:24px;background:#EBEBEB;border:1px solid #8A8A8A"></div>
<div class="t" style="left:99.38px;top:217.81px;font-size:12.7px;color:#111;transform:scaleX(0.9618);transform-origin:1.02px 0;">PARIS</div>
<div class="t" style="left:211.83px;top:215.81px;font-size:12.7px;color:#1a1a1a;transform:scaleX(0.9633);transform-origin:0.57px 0;">Sub Orders</div>
<div class="a" style="left:289px;top:212px;width:66px;height:24px;background:#EBEBEB;border:1px solid #8A8A8A"></div>
<div class="t" style="left:290.09px;top:217.81px;font-size:12.7px;color:#111;transform:scaleX(0.9186);transform-origin:0.51px 0;">0</div>
<div class="t" style="left:16.28px;top:243.81px;font-size:12.7px;color:#1a1a1a;transform:scaleX(0.9644);transform-origin:1.02px 0;">Project Mgr.</div>
<div class="a" style="left:99px;top:240px;width:255px;height:24px;background:#EEEDEB;border:1px solid #7A8FA6;box-shadow:inset 0 0 0 1px #C9DBEE"></div>
<div class="a" style="left:334px;top:240px;width:20px;height:24px;border:1px solid #7A8FA6;background:linear-gradient(#E4ECF5,#FFFFFF 40%,#C6D7EA)"></div>
<svg class="a" style="left:339px;top:250px" width="10" height="5"><path d="M0 0H10L5 5Z" fill="#222"/></svg>
<svg class="a" style="left:317px;top:242px" width="17" height="17" viewBox="0 0 17 17"><defs><radialGradient id="mg3" cx="0.38" cy="0.35" r="0.75"><stop offset="0" stop-color="#FFFFFF"/><stop offset="0.35" stop-color="#D8F2FF"/><stop offset="1" stop-color="#86BEE6"/></radialGradient></defs><path d="M10 10.2L14.6 14.8" stroke="#5E5A78" stroke-width="3.6" stroke-linecap="round"/><path d="M10.4 10L14.8 14.4" stroke="#F6A43A" stroke-width="2.2" stroke-linecap="round"/><circle cx="6.6" cy="6.6" r="5.2" fill="url(#mg3)" stroke="#77759A" stroke-width="1.3"/></svg>
<div class="t" style="left:16.73px;top:271.81px;font-size:12.7px;color:#1a1a1a;transform:scaleX(0.9999);transform-origin:0.57px 0;">Sales Person</div>
<div class="a" style="left:99px;top:268px;width:255px;height:24px;background:#EEEDEB;border:1px solid #7A8FA6;box-shadow:inset 0 0 0 1px #C9DBEE"></div>
<div class="a" style="left:334px;top:268px;width:20px;height:24px;border:1px solid #7A8FA6;background:linear-gradient(#E4ECF5,#FFFFFF 40%,#C6D7EA)"></div>
<svg class="a" style="left:339px;top:278px" width="10" height="5"><path d="M0 0H10L5 5Z" fill="#222"/></svg>
<svg class="a" style="left:317px;top:270px" width="17" height="17" viewBox="0 0 17 17"><defs><radialGradient id="mg4" cx="0.38" cy="0.35" r="0.75"><stop offset="0" stop-color="#FFFFFF"/><stop offset="0.35" stop-color="#D8F2FF"/><stop offset="1" stop-color="#86BEE6"/></radialGradient></defs><path d="M10 10.2L14.6 14.8" stroke="#5E5A78" stroke-width="3.6" stroke-linecap="round"/><path d="M10.4 10L14.8 14.4" stroke="#F6A43A" stroke-width="2.2" stroke-linecap="round"/><circle cx="6.6" cy="6.6" r="5.2" fill="url(#mg4)" stroke="#77759A" stroke-width="1.3"/></svg>
<div class="t" style="left:16.28px;top:299.81px;font-size:12.7px;color:#1a1a1a;transform:scaleX(0.9828);transform-origin:1.02px 0;">Labor Planner</div>
<div class="a" style="left:99px;top:296px;width:255px;height:24px;background:#fff;border:1px solid #000;box-shadow:inset 0 0 0 0.25px #000"></div>
<svg class="a" style="left:334px;top:297px" width="17" height="17" viewBox="0 0 17 17"><defs><radialGradient id="mg5" cx="0.38" cy="0.35" r="0.75"><stop offset="0" stop-color="#FFFFFF"/><stop offset="0.35" stop-color="#D8F2FF"/><stop offset="1" stop-color="#86BEE6"/></radialGradient></defs><path d="M10 10.2L14.6 14.8" stroke="#5E5A78" stroke-width="3.6" stroke-linecap="round"/><path d="M10.4 10L14.8 14.4" stroke="#F6A43A" stroke-width="2.2" stroke-linecap="round"/><circle cx="6.6" cy="6.6" r="5.2" fill="url(#mg5)" stroke="#77759A" stroke-width="1.3"/></svg>
<div class="a" style="left:366px;top:131px;width:215px;height:98px;border:1px solid #C4C4C4"></div>
<div class="a" style="left:370px;top:126px;width:97px;height:12px;background:#fff"></div>
<div class="t" style="left:372.72px;top:127.44px;font-size:12.0px;color:#111;font-weight:bold;transform:scaleX(0.9804);transform-origin:0.48px 0;">Charge Duration</div>
<div class="t" style="left:368.73px;top:144.81px;font-size:12.7px;color:#1a1a1a;transform:scaleX(0.9621);transform-origin:0.57px 0;">Start Date/Time</div>
<div class="a" style="left:458px;top:141px;width:120px;height:24px;background:#EBEBEB;border:1px solid #8A8A8A"></div>
<div class="t" style="left:458.59px;top:147.81px;font-size:12.7px;color:#111;transform:scaleX(0.9785);transform-origin:0.51px 0;">05/06/2018</div>
<div class="t" style="left:368.28px;top:173.81px;font-size:12.7px;color:#1a1a1a;transform:scaleX(0.9768);transform-origin:1.02px 0;">End Date/Time</div>
<div class="a" style="left:458px;top:170px;width:120px;height:24px;background:#EBEBEB;border:1px solid #8A8A8A"></div>
<div class="t" style="left:458.59px;top:176.81px;font-size:12.7px;color:#111;transform:scaleX(0.9785);transform-origin:0.51px 0;">05/10/2018</div>
<div class="t" style="left:368.28px;top:202.81px;font-size:12.7px;color:#1a1a1a;transform:scaleX(0.9943);transform-origin:1.02px 0;">Duration</div>
<div class="a" style="left:458px;top:199px;width:85px;height:24px;background:#EBEBEB;border:1px solid #8A8A8A"></div>
<div class="t" style="left:458.59px;top:205.81px;font-size:12.7px;color:#111;transform:scaleX(1.0655);transform-origin:0.51px 0;">5d</div>
<div class="t" style="left:587.97px;top:131.81px;font-size:12.7px;color:#1a1a1a;transform:scaleX(0.9537);transform-origin:0.64px 0;">Conv. Date</div>
<div class="a" style="left:655px;top:126px;width:89px;height:24px;background:#EBEBEB;border:1px solid #8A8A8A"></div>
<div class="a" style="left:589px;top:160px;width:12px;height:12px;border:1px solid;border-color:#6A7D95 #FFFFFF #FFFFFF #6A7D95"><div style="width:10px;height:10px;border:1px solid;border-color:#FFFFFF #6A7D95 #6A7D95 #FFFFFF;background:linear-gradient(135deg,#FFFFFF 0%,#FCE4D2 30%,#F6B083 65%,#F08A3C 100%)"></div></div><svg class="a" style="left:589px;top:160px" width="12" height="12" viewBox="0 0 13 13"><path d="M3 5H5.2V7.6L10 2.4L10.8 3.4L5.2 10H3Z" fill="#151515"/></svg>
<div class="t" style="left:605.93px;top:160.81px;font-size:12.7px;color:#1a1a1a;transform:scaleX(0.9856);transform-origin:0.57px 0;">Show Suggestions</div>
<div class="a" style="left:589px;top:180px;width:12px;height:12px;border:1.5px solid #B9D0EA;background:linear-gradient(135deg,#FFFFFF 0%,#FFFFFF 20%,#F9D2B4 60%,#F2A872 100%)"></div>
<div class="t" style="left:605.48px;top:180.81px;font-size:12.7px;color:#A3A3B0;transform:scaleX(0.9594);transform-origin:1.02px 0;">Event Pricing</div>
<div class="a" style="left:589px;top:200px;width:12px;height:12px;border:1px solid;border-color:#6A7D95 #FFFFFF #FFFFFF #6A7D95"><div style="width:10px;height:10px;border:1px solid;border-color:#FFFFFF #6A7D95 #6A7D95 #FFFFFF;background:linear-gradient(135deg,#FFFFFF 0%,#FCE4D2 30%,#F6B083 65%,#F08A3C 100%)"></div></div><svg class="a" style="left:589px;top:200px" width="12" height="12" viewBox="0 0 13 13"><path d="M3 5H5.2V7.6L10 2.4L10.8 3.4L5.2 10H3Z" fill="#151515"/></svg>
<div class="t" style="left:605.48px;top:199.81px;font-size:12.7px;color:#1a1a1a;transform:scaleX(0.9585);transform-origin:1.02px 0;">Day-Week-Month Pricing</div>
<div class="t" style="left:361.87px;top:242.81px;font-size:12.7px;color:#1a1a1a;transform:scaleX(0.9933);transform-origin:0.64px 0;">Customer</div>
<div class="a" style="left:421px;top:236px;width:160px;height:24px;background:#EBEBEB;border:1px solid #8A8A8A"></div>
<div class="t" style="left:421.68px;top:242.81px;font-size:12.7px;color:#111;transform:scaleX(0.9473);transform-origin:1.02px 0;">LG ELECTRONICS</div>
<svg class="a" style="left:561px;top:238px" width="17" height="17" viewBox="0 0 17 17"><defs><radialGradient id="mg6" cx="0.38" cy="0.35" r="0.75"><stop offset="0" stop-color="#FFFFFF"/><stop offset="0.35" stop-color="#D8F2FF"/><stop offset="1" stop-color="#86BEE6"/></radialGradient></defs><path d="M10 10.2L14.6 14.8" stroke="#5E5A78" stroke-width="3.6" stroke-linecap="round"/><path d="M10.4 10L14.8 14.4" stroke="#F6A43A" stroke-width="2.2" stroke-linecap="round"/><circle cx="6.6" cy="6.6" r="5.2" fill="url(#mg6)" stroke="#77759A" stroke-width="1.3"/></svg>
<div class="t" style="left:361.87px;top:270.81px;font-size:12.7px;color:#1a1a1a;transform:scaleX(0.9616);transform-origin:0.64px 0;">Contact</div>
<div class="a" style="left:421px;top:265px;width:160px;height:24px;background:#EBEBEB;border:1px solid #8A8A8A"></div>
<div class="t" style="left:422.45px;top:271.81px;font-size:12.7px;color:#111;transform:scaleX(0.9336);transform-origin:0.25px 0;">TOM HIDDLESTON</div>
<svg class="a" style="left:561px;top:267px" width="17" height="17" viewBox="0 0 17 17"><defs><radialGradient id="mg7" cx="0.38" cy="0.35" r="0.75"><stop offset="0" stop-color="#FFFFFF"/><stop offset="0.35" stop-color="#D8F2FF"/><stop offset="1" stop-color="#86BEE6"/></radialGradient></defs><path d="M10 10.2L14.6 14.8" stroke="#5E5A78" stroke-width="3.6" stroke-linecap="round"/><path d="M10.4 10L14.8 14.4" stroke="#F6A43A" stroke-width="2.2" stroke-linecap="round"/><circle cx="6.6" cy="6.6" r="5.2" fill="url(#mg7)" stroke="#77759A" stroke-width="1.3"/></svg>
<div class="t" style="left:361.87px;top:299.81px;font-size:12.7px;color:#1a1a1a;transform:scaleX(0.9788);transform-origin:0.64px 0;">Contact Tel #</div>
<div class="a" style="left:451px;top:294px;width:129px;height:24px;background:#EBEBEB;border:1px solid #8A8A8A"></div>
<div class="t" style="left:452.26px;top:300.81px;font-size:12.7px;color:#111;transform:scaleX(0.9827);transform-origin:0.64px 0;">+44-17-5349-1585</div>
<div class="t" style="left:586.38px;top:241.81px;font-size:12.7px;color:#1a1a1a;transform:scaleX(1.0146);transform-origin:1.02px 0;">Bill To</div>
<div class="a" style="left:654px;top:236px;width:160px;height:24px;background:#EBEBEB;border:1px solid #8A8A8A"></div>
<div class="t" style="left:654.08px;top:242.81px;font-size:12.7px;color:#111;transform:scaleX(0.9564);transform-origin:1.02px 0;">LG ELECTRONICS</div>
<svg class="a" style="left:794px;top:238px" width="17" height="17" viewBox="0 0 17 17"><defs><radialGradient id="mg8" cx="0.38" cy="0.35" r="0.75"><stop offset="0" stop-color="#FFFFFF"/><stop offset="0.35" stop-color="#D8F2FF"/><stop offset="1" stop-color="#86BEE6"/></radialGradient></defs><path d="M10 10.2L14.6 14.8" stroke="#5E5A78" stroke-width="3.6" stroke-linecap="round"/><path d="M10.4 10L14.8 14.4" stroke="#F6A43A" stroke-width="2.2" stroke-linecap="round"/><circle cx="6.6" cy="6.6" r="5.2" fill="url(#mg8)" stroke="#77759A" stroke-width="1.3"/></svg>
<div class="t" style="left:586.38px;top:270.81px;font-size:12.7px;color:#1a1a1a;transform:scaleX(0.9759);transform-origin:1.02px 0;">Bill Contact</div>
<div class="a" style="left:654px;top:265px;width:160px;height:24px;background:#EBEBEB;border:1px solid #8A8A8A"></div>
<div class="t" style="left:654.85px;top:271.81px;font-size:12.7px;color:#111;transform:scaleX(0.9435);transform-origin:0.25px 0;">TOM HIDDLESTON</div>
<svg class="a" style="left:794px;top:267px" width="17" height="17" viewBox="0 0 17 17"><defs><radialGradient id="mg9" cx="0.38" cy="0.35" r="0.75"><stop offset="0" stop-color="#FFFFFF"/><stop offset="0.35" stop-color="#D8F2FF"/><stop offset="1" stop-color="#86BEE6"/></radialGradient></defs><path d="M10 10.2L14.6 14.8" stroke="#5E5A78" stroke-width="3.6" stroke-linecap="round"/><path d="M10.4 10L14.8 14.4" stroke="#F6A43A" stroke-width="2.2" stroke-linecap="round"/><circle cx="6.6" cy="6.6" r="5.2" fill="url(#mg9)" stroke="#77759A" stroke-width="1.3"/></svg>
<div class="t" style="left:586.38px;top:299.81px;font-size:12.7px;color:#1a1a1a;transform:scaleX(0.9959);transform-origin:1.02px 0;">Language</div>
<div class="a" style="left:654px;top:294px;width:90px;height:24px;background:#EBEBEB;border:1px solid #8A8A8A"></div>
<svg class="a" style="left:724px;top:296px" width="17" height="17" viewBox="0 0 17 17"><defs><radialGradient id="mg10" cx="0.38" cy="0.35" r="0.75"><stop offset="0" stop-color="#FFFFFF"/><stop offset="0.35" stop-color="#D8F2FF"/><stop offset="1" stop-color="#86BEE6"/></radialGradient></defs><path d="M10 10.2L14.6 14.8" stroke="#5E5A78" stroke-width="3.6" stroke-linecap="round"/><path d="M10.4 10L14.8 14.4" stroke="#F6A43A" stroke-width="2.2" stroke-linecap="round"/><circle cx="6.6" cy="6.6" r="5.2" fill="url(#mg10)" stroke="#77759A" stroke-width="1.3"/></svg>
<div class="a" style="left:752px;top:148px;width:290px;height:83px;border:1px solid #7196CF;border-right-color:#7B8B9F;border-bottom-color:#7B8B9F;background:#C7DFF4"></div>
<div class="a" style="left:753px;top:149px;width:288px;height:1px;background:#fff"></div>
<div class="a" style="left:754px;top:152px;width:285px;height:76px;background:#fff"></div>
<div class="a" style="left:754px;top:152px;width:284px;height:75px;border:1px solid #ABABAB"></div>
<svg class="a" style="left:753px;top:125px" width="212" height="24" viewBox="753 125 212 24"><path d="M843 148V132L849 126H964V148Z" fill="#6B7E96"/><path d="M844 148V132.4L849.4 127H963V148Z" fill="#FFFFFF"/><path d="M845 148V132.8L849.8 128H963V148Z" fill="#FB9A4C"/><path d="M754 148V132L760 126H844V148Z" fill="#5A82D2"/><path d="M755 148V132.4L760.4 127H843V148Z" fill="#FFFFFF"/><path d="M756 148V132.8L760.8 128H843V148Z" fill="#C34B2C"/><rect x="755" y="148" width="88" height="1" fill="#C7DFF4"/></svg>
<div class="t" style="left:759.41px;top:132.17px;font-size:12.3px;color:#fff;font-weight:bold;transform:scaleX(0.9737);transform-origin:0.49px 0;">Comments</div>
<div class="t" style="left:848.29px;top:131.90px;font-size:12.6px;color:#111;transform:scaleX(1.0157);transform-origin:1.01px 0;">LaborComments</div>
<div class="a" style="left:761px;top:154px;width:269px;height:69px;background:#EEEEEE;border:2px solid #6E767F;border-left-width:1px;border-top-width:2px"></div>
<svg class="a" style="left:1011px;top:156px" width="17" height="17" viewBox="0 0 17 17"><defs><radialGradient id="mg11" cx="0.38" cy="0.35" r="0.75"><stop offset="0" stop-color="#FFFFFF"/><stop offset="0.35" stop-color="#D8F2FF"/><stop offset="1" stop-color="#86BEE6"/></radialGradient></defs><path d="M10 10.2L14.6 14.8" stroke="#5E5A78" stroke-width="3.6" stroke-linecap="round"/><path d="M10.4 10L14.8 14.4" stroke="#F6A43A" stroke-width="2.2" stroke-linecap="round"/><circle cx="6.6" cy="6.6" r="5.2" fill="url(#mg11)" stroke="#77759A" stroke-width="1.3"/></svg>
<div class="t" style="left:825.28px;top:248.81px;font-size:12.7px;color:#1a1a1a;transform:scaleX(0.9844);transform-origin:1.02px 0;">Document Folder:</div>
<div class="a" style="left:1014px;top:240px;width:49px;height:23px;border:1px solid #C4C4C4;background:#fff"></div>
<div class="a" style="left:1024px;top:242px;width:30px;height:20px;border:1px solid #7A6E6E;border-top-width:1.5px;border-bottom-width:1.5px;border-radius:2px;background:#fff"></div>
<div class="t" style="left:1024.92px;top:247.34px;font-size:11.0px;color:#000;transform:scaleX(0.9397);transform-origin:0.88px 0;-webkit-text-stroke:0.2px #000;">Reset</div>
<div class="a" style="left:826px;top:264px;width:216px;height:49px;background:#EEEEEE;border:2px solid #737B84;border-left-width:1.5px"></div>
<div class="a" style="left:8px;top:356px;width:1172px;height:303px;background:#C7DFF4;border:1px solid #7196CF;border-right-color:#7B8B9F;border-bottom-color:#7B8B9F"></div>
<div class="a" style="left:9px;top:357px;width:1170px;height:1px;background:#fff"></div>
<div class="a" style="left:10px;top:360px;width:1166px;height:295px;background:#fff"></div>
<svg class="a" style="left:9px;top:333px" width="127" height="24" viewBox="9 333 127 24"><path d="M76 356V340L82 334H135V356Z" fill="#6B7E96"/><path d="M77 356V340.4L82.4 335H134V356Z" fill="#FFFFFF"/><path d="M78 356V340.8L82.8 336H134V356Z" fill="#FB9A4C"/><path d="M10 356V340L16 334H77V356Z" fill="#5A82D2"/><path d="M11 356V340.4L16.4 335H76V356Z" fill="#FFFFFF"/><path d="M12 356V340.8L16.8 336H76V356Z" fill="#C34B2C"/><rect x="11" y="356" width="65" height="1" fill="#C7DFF4"/></svg>
<div class="t" style="left:15.20px;top:340.17px;font-size:12.3px;color:#fff;font-weight:bold;transform:scaleX(1.0044);transform-origin:0.80px 0;">Item(s)</div>
<div class="t" style="left:81.49px;top:339.90px;font-size:12.6px;color:#111;transform:scaleX(1.0034);transform-origin:1.01px 0;">Labor</div>
<div class="a" style="left:10px;top:360px;width:1166px;height:34px;border:1px solid #ABABAB;background:#fff"></div>
<div class="t" style="left:44.93px;top:369.81px;font-size:12.7px;color:#1a1a1a;transform:scaleX(0.9664);transform-origin:0.57px 0;">Search :</div>
<div class="t" style="left:120.20px;top:369.81px;font-size:12.7px;color:#1a1a1a;transform:scaleX(0.9689);transform-origin:0.00px 0;">Asset</div>
<div class="a" style="left:162px;top:365px;width:120px;height:24px;background:#fff;border:1px solid #000;box-shadow:inset 0 0 0 0.25px #000"></div>
<div class="a" style="left:164px;top:368px;width:1px;height:17px;background:#000"></div>
<div class="t" style="left:361.48px;top:369.81px;font-size:12.7px;color:#1a1a1a;transform:scaleX(0.9702);transform-origin:1.02px 0;">Product</div>
<div class="a" style="left:412px;top:365px;width:195px;height:24px;background:#fff;border:1px solid #000;box-shadow:inset 0 0 0 0.25px #000"></div>
<div class="t" style="left:624.99px;top:370.07px;font-size:11.3px;color:#1a1a1a;transform:scaleX(0.9436);transform-origin:0.51px 0;">Qty</div>
<div class="a" style="left:647px;top:365px;width:40px;height:24px;background:#fff;border:1px solid #000;box-shadow:inset 0 0 0 0.25px #000"></div>
<div class="t" style="left:648.55px;top:371.81px;font-size:12.7px;color:#111;">1</div>
<div class="a" style="left:707px;top:371px;width:12px;height:12px;border:1px solid;border-color:#6A7D95 #FFFFFF #FFFFFF #6A7D95"><div style="width:10px;height:10px;border:1px solid;border-color:#FFFFFF #6A7D95 #6A7D95 #FFFFFF;background:linear-gradient(135deg,#FFFFFF 0%,#FCE4D2 30%,#F6B083 65%,#F08A3C 100%)"></div></div>
<div class="t" style="left:723.55px;top:371.81px;font-size:12.7px;color:#1a1a1a;transform:scaleX(0.9799);transform-origin:0.95px 0;">Update existing lines</div>
<div class="a" style="left:10px;top:395px;width:1166px;height:260px;border:1px solid #ABABAB;background:#fff"></div>
<div class="a" style="left:12px;top:397px;width:1162px;height:256px;border:1px solid #768AA0;background:#fff"></div>
<div class="a" style="left:13px;top:398px;width:1160px;height:236px;overflow:hidden">
<div class="a" style="left:0px;top:0px;width:1161px;height:20px;background:#FF6E3C"></div>
<div class="a" style="left:0px;top:20px;width:1161px;height:18px;background:#FB9A4C"></div>
<div class="a" style="left:0px;top:38px;width:1161px;height:1px;background:#C17A3A"></div>
<div class="a" style="left:0px;top:39px;width:1161px;height:18px;background:#FFFFFF"></div>
<div class="a" style="left:0px;top:57px;width:1161px;height:1px;background:#C17A3A"></div>
<div class="a" style="left:0px;top:0px;width:14px;height:19px;background:#C34B2C;border:1px solid #8E3A1E;box-shadow:inset 1px 1px 0 #FF6E3C"></div>
<div class="t" style="left:0px;top:5.07px;width:14px;text-align:center;font-size:12.3px;color:#fff;">T</div>
<div class="a" style="left:15px;top:0px;width:14px;height:19px;background:#C34B2C;border:1px solid #8E3A1E;box-shadow:inset 1px 1px 0 #FF6E3C"></div>
<div class="t" style="left:15px;top:5.07px;width:14px;text-align:center;font-size:12.3px;color:#fff;">C</div>
<div class="a" style="left:14px;top:20px;width:1px;height:38px;background:#C17A3A"></div>
<div class="a" style="left:30px;top:0px;width:14px;height:19px;background:#C34B2C;border:1px solid #8E3A1E;box-shadow:inset 1px 1px 0 #FF6E3C"></div>
<div class="t" style="left:30px;top:5.07px;width:14px;text-align:center;font-size:12.3px;color:#fff;">X</div>
<div class="a" style="left:29px;top:20px;width:1px;height:38px;background:#C17A3A"></div>
<div class="a" style="left:45px;top:0px;width:14px;height:19px;background:#C34B2C;border:1px solid #8E3A1E;box-shadow:inset 1px 1px 0 #FF6E3C"></div>
<div class="t" style="left:45px;top:5.07px;width:14px;text-align:center;font-size:12.3px;color:#fff;">M</div>
<div class="a" style="left:44px;top:20px;width:1px;height:38px;background:#C17A3A"></div>
<div class="a" style="left:60px;top:0px;width:14px;height:19px;background:#C34B2C;border:1px solid #8E3A1E;box-shadow:inset 1px 1px 0 #FF6E3C"></div>
<div class="t" style="left:60px;top:5.07px;width:14px;text-align:center;font-size:12.3px;color:#fff;">S</div>
<div class="a" style="left:59px;top:20px;width:1px;height:38px;background:#C17A3A"></div>
<div class="a" style="left:75px;top:0px;width:19px;height:19px;background:#C34B2C;border:1px solid #8E3A1E;box-shadow:inset 1px 1px 0 #FF6E3C"></div>
<div class="t" style="left:75px;top:5.07px;width:19px;text-align:center;font-size:12.3px;color:#fff;">I.C</div>
<div class="a" style="left:74px;top:20px;width:1px;height:38px;background:#C17A3A"></div>
<div class="a" style="left:95px;top:0px;width:19px;height:19px;background:#C34B2C;border:1px solid #8E3A1E;box-shadow:inset 1px 1px 0 #FF6E3C"></div>
<div class="t" style="left:95px;top:5.07px;width:19px;text-align:center;font-size:12.3px;color:#fff;">I....</div>
<div class="a" style="left:94px;top:20px;width:1px;height:38px;background:#C17A3A"></div>
<div class="a" style="left:115px;top:0px;width:19px;height:19px;background:#C34B2C;border:1px solid #8E3A1E;box-shadow:inset 1px 1px 0 #FF6E3C"></div>
<div class="t" style="left:115px;top:5.07px;width:19px;text-align:center;font-size:12.3px;color:#fff;">I.I</div>
<div class="a" style="left:114px;top:20px;width:1px;height:38px;background:#C17A3A"></div>
<div class="a" style="left:135px;top:0px;width:74px;height:19px;background:#C34B2C;border:1px solid #8E3A1E;box-shadow:inset 1px 1px 0 #FF6E3C"></div>
<div class="t" style="left:135px;top:5.07px;width:74px;text-align:center;font-size:12.3px;color:#fff;">Status</div>
<div class="a" style="left:134px;top:20px;width:1px;height:38px;background:#C17A3A"></div>
<div class="a" style="left:210px;top:0px;width:19px;height:19px;background:#C34B2C;border:1px solid #8E3A1E;box-shadow:inset 1px 1px 0 #FF6E3C"></div>
<div class="t" style="left:210px;top:5.07px;width:19px;text-align:center;font-size:12.3px;color:#fff;">L</div>
<div class="a" style="left:209px;top:20px;width:1px;height:38px;background:#C17A3A"></div>
<div class="a" style="left:230px;top:0px;width:44px;height:19px;background:#C34B2C;border:1px solid #8E3A1E;box-shadow:inset 1px 1px 0 #FF6E3C"></div>
<div class="t" style="left:230px;top:5.07px;width:44px;text-align:center;font-size:12.3px;color:#fff;">Action</div>
<div class="a" style="left:229px;top:20px;width:1px;height:38px;background:#C17A3A"></div>
<div class="a" style="left:275px;top:0px;width:99px;height:19px;background:#C34B2C;border:1px solid #8E3A1E;box-shadow:inset 1px 1px 0 #FF6E3C"></div>
<div class="t" style="left:275px;top:5.07px;width:99px;text-align:center;font-size:12.3px;color:#fff;">Product ID</div>
<div class="a" style="left:274px;top:20px;width:1px;height:38px;background:#C17A3A"></div>
<div class="a" style="left:375px;top:0px;width:123px;height:19px;background:#C34B2C;border:1px solid #8E3A1E;box-shadow:inset 1px 1px 0 #FF6E3C"></div>
<div class="t" style="left:375px;top:5.07px;width:123px;text-align:center;font-size:12.3px;color:#fff;">Description</div>
<div class="a" style="left:374px;top:20px;width:1px;height:38px;background:#C17A3A"></div>
<div class="a" style="left:499px;top:0px;width:54px;height:19px;background:#C34B2C;border:1px solid #8E3A1E;box-shadow:inset 1px 1px 0 #FF6E3C"></div>
<div class="t" style="left:499px;top:5.07px;width:54px;text-align:center;font-size:12.3px;color:#fff;">Duration</div>
<div class="a" style="left:498px;top:20px;width:1px;height:38px;background:#C17A3A"></div>
<div class="a" style="left:554px;top:0px;width:29px;height:19px;background:#C34B2C;border:1px solid #8E3A1E;box-shadow:inset 1px 1px 0 #FF6E3C"></div>
<div class="t" style="left:554px;top:5.07px;width:29px;text-align:center;font-size:12.3px;color:#fff;">Qty</div>
<div class="a" style="left:553px;top:20px;width:1px;height:38px;background:#C17A3A"></div>
<div class="a" style="left:584px;top:0px;width:99px;height:19px;background:#C34B2C;border:1px solid #8E3A1E;box-shadow:inset 1px 1px 0 #FF6E3C"></div>
<div class="t" style="left:584px;top:5.07px;width:99px;text-align:center;font-size:12.3px;color:#fff;">Shipping Site</div>
<div class="a" style="left:583px;top:20px;width:1px;height:38px;background:#C17A3A"></div>
<div class="a" style="left:684px;top:0px;width:100px;height:19px;background:#C34B2C;border:1px solid #8E3A1E;box-shadow:inset 1px 1px 0 #FF6E3C"></div>
<div class="t" style="left:684px;top:5.07px;width:100px;text-align:center;font-size:12.3px;color:#fff;">Returning Site</div>
<div class="a" style="left:683px;top:20px;width:1px;height:38px;background:#C17A3A"></div>
<div class="a" style="left:785px;top:0px;width:38px;height:19px;background:#C34B2C;border:1px solid #8E3A1E;box-shadow:inset 1px 1px 0 #FF6E3C"></div>
<div class="t" style="left:785px;top:5.07px;width:38px;text-align:center;font-size:12.3px;color:#fff;">Unit</div>
<div class="a" style="left:784px;top:20px;width:1px;height:38px;background:#C17A3A"></div>
<div class="a" style="left:824px;top:0px;width:89px;height:19px;background:#C34B2C;border:1px solid #8E3A1E;box-shadow:inset 1px 1px 0 #FF6E3C"></div>
<div class="t" style="left:824px;top:5.07px;width:89px;text-align:center;font-size:12.3px;color:#fff;">Day/Each Price</div>
<div class="a" style="left:823px;top:20px;width:1px;height:38px;background:#C17A3A"></div>
<div class="a" style="left:914px;top:0px;width:69px;height:19px;background:#C34B2C;border:1px solid #8E3A1E;box-shadow:inset 1px 1px 0 #FF6E3C"></div>
<div class="t" style="left:914px;top:5.07px;width:69px;text-align:center;font-size:12.3px;color:#fff;">Week Price</div>
<div class="a" style="left:913px;top:20px;width:1px;height:38px;background:#C17A3A"></div>
<div class="a" style="left:984px;top:0px;width:69px;height:19px;background:#C34B2C;border:1px solid #8E3A1E;box-shadow:inset 1px 1px 0 #FF6E3C"></div>
<div class="t" style="left:984px;top:5.07px;width:69px;text-align:center;font-size:12.3px;color:#fff;">Month Price</div>
<div class="a" style="left:983px;top:20px;width:1px;height:38px;background:#C17A3A"></div>
<div class="a" style="left:1054px;top:0px;width:54px;height:19px;background:#C34B2C;border:1px solid #8E3A1E;box-shadow:inset 1px 1px 0 #FF6E3C"></div>
<div class="t" style="left:1054px;top:5.07px;width:54px;text-align:center;font-size:12.3px;color:#fff;">Discount</div>
<div class="a" style="left:1053px;top:20px;width:1px;height:38px;background:#C17A3A"></div>
<div class="a" style="left:1109px;top:0px;width:60px;height:19px;background:#C34B2C;border:1px solid #8E3A1E;box-shadow:inset 1px 1px 0 #FF6E3C"></div>
<div class="t" style="left:1109px;top:5.07px;width:60px;text-align:center;font-size:12.3px;color:#fff;">Net Each</div>
<div class="a" style="left:1108px;top:20px;width:1px;height:38px;background:#C17A3A"></div>
<div class="a" style="left:1px;top:23px;width:13px;height:13px;border:1px solid;border-color:#6A7D95 #FFFFFF #FFFFFF #6A7D95"><div style="width:11px;height:11px;border:1px solid;border-color:#FFFFFF #6A7D95 #6A7D95 #FFFFFF;background:linear-gradient(135deg,#FFFFFF 0%,#FCE4D2 30%,#F6B083 65%,#F08A3C 100%)"></div></div><svg class="a" style="left:1px;top:23px" width="13" height="13" viewBox="0 0 13 13"><path d="M3 5H5.2V7.6L10 2.4L10.8 3.4L5.2 10H3Z" fill="#151515"/></svg>
<div class="a" style="left:16px;top:23px;width:13px;height:13px;border:1px solid;border-color:#6A7D95 #FFFFFF #FFFFFF #6A7D95"><div style="width:11px;height:11px;border:1px solid;border-color:#FFFFFF #6A7D95 #6A7D95 #FFFFFF;background:linear-gradient(135deg,#FFFFFF 0%,#FCE4D2 30%,#F6B083 65%,#F08A3C 100%)"></div></div><svg class="a" style="left:16px;top:23px" width="13" height="13" viewBox="0 0 13 13"><path d="M3 5H5.2V7.6L10 2.4L10.8 3.4L5.2 10H3Z" fill="#151515"/></svg>
<div class="a" style="left:31px;top:23px;width:13px;height:13px;border:1px solid;border-color:#6A7D95 #FFFFFF #FFFFFF #6A7D95"><div style="width:11px;height:11px;border:1px solid;border-color:#FFFFFF #6A7D95 #6A7D95 #FFFFFF;background:linear-gradient(135deg,#FFFFFF 0%,#FCE4D2 30%,#F6B083 65%,#F08A3C 100%)"></div></div>
<div class="a" style="left:46px;top:23px;width:13px;height:13px;border:1px solid;border-color:#6A7D95 #FFFFFF #FFFFFF #6A7D95"><div style="width:11px;height:11px;border:1px solid;border-color:#FFFFFF #6A7D95 #6A7D95 #FFFFFF;background:linear-gradient(135deg,#FFFFFF 0%,#FCE4D2 30%,#F6B083 65%,#F08A3C 100%)"></div></div>
<div class="a" style="left:61px;top:23px;width:13px;height:13px;border:1px solid;border-color:#6A7D95 #FFFFFF #FFFFFF #6A7D95"><div style="width:11px;height:11px;border:1px solid;border-color:#FFFFFF #6A7D95 #6A7D95 #FFFFFF;background:linear-gradient(135deg,#FFFFFF 0%,#FCE4D2 30%,#F6B083 65%,#F08A3C 100%)"></div></div>
<div class="a" style="left:78px;top:23px;width:13px;height:13px;border:1px solid;border-color:#6A7D95 #FFFFFF #FFFFFF #6A7D95"><div style="width:11px;height:11px;border:1px solid;border-color:#FFFFFF #6A7D95 #6A7D95 #FFFFFF;background:linear-gradient(135deg,#FFFFFF 0%,#FCE4D2 30%,#F6B083 65%,#F08A3C 100%)"></div></div>
<div class="a" style="left:98px;top:23px;width:13px;height:13px;border:1px solid;border-color:#6A7D95 #FFFFFF #FFFFFF #6A7D95"><div style="width:11px;height:11px;border:1px solid;border-color:#FFFFFF #6A7D95 #6A7D95 #FFFFFF;background:linear-gradient(135deg,#FFFFFF 0%,#FCE4D2 30%,#F6B083 65%,#F08A3C 100%)"></div></div>
<div class="a" style="left:118px;top:23px;width:13px;height:13px;border:1px solid;border-color:#6A7D95 #FFFFFF #FFFFFF #6A7D95"><div style="width:11px;height:11px;border:1px solid;border-color:#FFFFFF #6A7D95 #6A7D95 #FFFFFF;background:linear-gradient(135deg,#FFFFFF 0%,#FCE4D2 30%,#F6B083 65%,#F08A3C 100%)"></div></div>
<div class="a" style="left:213px;top:23px;width:13px;height:13px;border:1px solid;border-color:#6A7D95 #FFFFFF #FFFFFF #6A7D95"><div style="width:11px;height:11px;border:1px solid;border-color:#FFFFFF #6A7D95 #6A7D95 #FFFFFF;background:linear-gradient(135deg,#FFFFFF 0%,#FCE4D2 30%,#F6B083 65%,#F08A3C 100%)"></div></div>
<div class="t" style="left:135.69px;top:23.90px;font-size:12.6px;color:#111;transform:scaleX(0.9981);transform-origin:1.01px 0;">Reserved</div>
<div class="t" style="left:230.79px;top:23.90px;font-size:12.6px;color:#111;transform:scaleX(0.9994);transform-origin:1.01px 0;">Rent</div>
<div class="t" style="left:275.49px;top:23.90px;font-size:12.6px;color:#111;transform:scaleX(0.9465);transform-origin:1.01px 0;">LG STYLUS</div>
<div class="t" style="left:381.59px;top:23.90px;font-size:12.6px;color:#111;transform:scaleX(0.9450);transform-origin:1.01px 0;">LG STYLUS</div>
<div class="t" style="left:500.00px;top:23.90px;font-size:12.6px;color:#111;transform:scaleX(1.0503);transform-origin:0.50px 0;">5d</div>
<div class="t" style="left:575.65px;top:23.90px;font-size:12.6px;color:#111;transform:scaleX(0.7480);transform-origin:0.94px 0;">1</div>
<div class="t" style="left:585.27px;top:23.90px;font-size:12.6px;color:#111;transform:scaleX(0.9456);transform-origin:0.63px 0;">COLOGNE</div>
<div class="t" style="left:684.59px;top:23.90px;font-size:12.6px;color:#111;transform:scaleX(0.9722);transform-origin:1.01px 0;">PARIS</div>
<div class="t" style="left:784.59px;top:23.90px;font-size:12.6px;color:#111;transform:scaleX(0.9430);transform-origin:1.01px 0;">Day</div>
<div class="t" style="left:824px;top:23.90px;width:87px;text-align:right;font-size:12.6px;color:#111;">0.00</div>
<div class="t" style="left:914px;top:23.90px;width:67px;text-align:right;font-size:12.6px;color:#111;">0.00</div>
<div class="t" style="left:984px;top:23.90px;width:67px;text-align:right;font-size:12.6px;color:#111;">0.00</div>
<div class="t" style="left:1054px;top:23.90px;width:52px;text-align:right;font-size:12.6px;color:#111;">0.00</div>
<div class="t" style="left:1109px;top:23.90px;width:58px;text-align:right;font-size:12.6px;color:#111;">0.00</div>
<div class="a" style="left:1px;top:42px;width:13px;height:13px;border:1px solid;border-color:#6A7D95 #FFFFFF #FFFFFF #6A7D95"><div style="width:11px;height:11px;border:1px solid;border-color:#FFFFFF #6A7D95 #6A7D95 #FFFFFF;background:linear-gradient(135deg,#FFFFFF 0%,#FCE4D2 30%,#F6B083 65%,#F08A3C 100%)"></div></div><svg class="a" style="left:1px;top:42px" width="13" height="13" viewBox="0 0 13 13"><path d="M3 5H5.2V7.6L10 2.4L10.8 3.4L5.2 10H3Z" fill="#151515"/></svg>
<div class="a" style="left:16px;top:42px;width:13px;height:13px;border:1px solid;border-color:#6A7D95 #FFFFFF #FFFFFF #6A7D95"><div style="width:11px;height:11px;border:1px solid;border-color:#FFFFFF #6A7D95 #6A7D95 #FFFFFF;background:linear-gradient(135deg,#FFFFFF 0%,#FCE4D2 30%,#F6B083 65%,#F08A3C 100%)"></div></div><svg class="a" style="left:16px;top:42px" width="13" height="13" viewBox="0 0 13 13"><path d="M3 5H5.2V7.6L10 2.4L10.8 3.4L5.2 10H3Z" fill="#151515"/></svg>
<div class="a" style="left:31px;top:42px;width:13px;height:13px;border:1px solid;border-color:#6A7D95 #FFFFFF #FFFFFF #6A7D95"><div style="width:11px;height:11px;border:1px solid;border-color:#FFFFFF #6A7D95 #6A7D95 #FFFFFF;background:linear-gradient(135deg,#FFFFFF 0%,#FCE4D2 30%,#F6B083 65%,#F08A3C 100%)"></div></div>
<div class="a" style="left:46px;top:42px;width:13px;height:13px;border:1px solid;border-color:#6A7D95 #FFFFFF #FFFFFF #6A7D95"><div style="width:11px;height:11px;border:1px solid;border-color:#FFFFFF #6A7D95 #6A7D95 #FFFFFF;background:linear-gradient(135deg,#FFFFFF 0%,#FCE4D2 30%,#F6B083 65%,#F08A3C 100%)"></div></div>
<div class="a" style="left:61px;top:42px;width:13px;height:13px;border:1px solid;border-color:#6A7D95 #FFFFFF #FFFFFF #6A7D95"><div style="width:11px;height:11px;border:1px solid;border-color:#FFFFFF #6A7D95 #6A7D95 #FFFFFF;background:linear-gradient(135deg,#FFFFFF 0%,#FCE4D2 30%,#F6B083 65%,#F08A3C 100%)"></div></div>
<div class="a" style="left:78px;top:42px;width:13px;height:13px;border:1px solid;border-color:#6A7D95 #FFFFFF #FFFFFF #6A7D95"><div style="width:11px;height:11px;border:1px solid;border-color:#FFFFFF #6A7D95 #6A7D95 #FFFFFF;background:linear-gradient(135deg,#FFFFFF 0%,#FCE4D2 30%,#F6B083 65%,#F08A3C 100%)"></div></div>
<div class="a" style="left:98px;top:42px;width:13px;height:13px;border:1px solid;border-color:#6A7D95 #FFFFFF #FFFFFF #6A7D95"><div style="width:11px;height:11px;border:1px solid;border-color:#FFFFFF #6A7D95 #6A7D95 #FFFFFF;background:linear-gradient(135deg,#FFFFFF 0%,#FCE4D2 30%,#F6B083 65%,#F08A3C 100%)"></div></div>
<div class="a" style="left:118px;top:42px;width:13px;height:13px;border:1px solid;border-color:#6A7D95 #FFFFFF #FFFFFF #6A7D95"><div style="width:11px;height:11px;border:1px solid;border-color:#FFFFFF #6A7D95 #6A7D95 #FFFFFF;background:linear-gradient(135deg,#FFFFFF 0%,#FCE4D2 30%,#F6B083 65%,#F08A3C 100%)"></div></div>
<div class="a" style="left:213px;top:42px;width:13px;height:13px;border:1px solid;border-color:#6A7D95 #FFFFFF #FFFFFF #6A7D95"><div style="width:11px;height:11px;border:1px solid;border-color:#FFFFFF #6A7D95 #6A7D95 #FFFFFF;background:linear-gradient(135deg,#FFFFFF 0%,#FCE4D2 30%,#F6B083 65%,#F08A3C 100%)"></div></div>
<div class="t" style="left:135.69px;top:42.90px;font-size:12.6px;color:#111;transform:scaleX(0.9981);transform-origin:1.01px 0;">Reserved</div>
<div class="t" style="left:230.79px;top:42.90px;font-size:12.6px;color:#111;transform:scaleX(0.9994);transform-origin:1.01px 0;">Rent</div>
<div class="t" style="left:275.49px;top:42.90px;font-size:12.6px;color:#111;transform:scaleX(0.9465);transform-origin:1.01px 0;">LG STYLUS</div>
<div class="t" style="left:381.59px;top:42.90px;font-size:12.6px;color:#111;transform:scaleX(0.9450);transform-origin:1.01px 0;">LG STYLUS</div>
<div class="t" style="left:500.00px;top:42.90px;font-size:12.6px;color:#111;transform:scaleX(1.0503);transform-origin:0.50px 0;">5d</div>
<div class="t" style="left:575.65px;top:42.90px;font-size:12.6px;color:#111;transform:scaleX(0.7480);transform-origin:0.94px 0;">1</div>
<div class="t" style="left:584.69px;top:42.90px;font-size:12.6px;color:#111;transform:scaleX(0.9694);transform-origin:1.01px 0;">PARIS</div>
<div class="t" style="left:684.59px;top:42.90px;font-size:12.6px;color:#111;transform:scaleX(0.9722);transform-origin:1.01px 0;">PARIS</div>
<div class="t" style="left:784.59px;top:42.90px;font-size:12.6px;color:#111;transform:scaleX(0.9430);transform-origin:1.01px 0;">Day</div>
<div class="t" style="left:824px;top:42.90px;width:87px;text-align:right;font-size:12.6px;color:#111;">0.00</div>
<div class="t" style="left:914px;top:42.90px;width:67px;text-align:right;font-size:12.6px;color:#111;">0.00</div>
<div class="t" style="left:984px;top:42.90px;width:67px;text-align:right;font-size:12.6px;color:#111;">0.00</div>
<div class="t" style="left:1054px;top:42.90px;width:52px;text-align:right;font-size:12.6px;color:#111;">0.00</div>
<div class="t" style="left:1109px;top:42.90px;width:58px;text-align:right;font-size:12.6px;color:#111;">0.00</div>
</div>
<div class="a" style="left:596px;top:397px;width:202px;height:59px;border:2px solid #B3171D"></div>
<div class="a" style="left:13px;top:635px;width:1160px;height:18px;background:#EDEDED;border-top:1px solid #768AA0;border-bottom:1px solid #768AA0"></div>
<div class="a" style="left:13px;top:651px;width:1160px;height:1px;background:#B4CAE8"></div>
<svg class="a" style="left:19px;top:640px" width="5" height="8"><path d="M5 0V8L0 4Z" fill="#222"/></svg>
<div class="a" style="left:28px;top:635px;width:575px;height:16px;border:1px solid #FFC400;background:linear-gradient(#E4935C 0,#E4935C 1px,#F1C5A1 1px,#EDB68C 50%,#E8A06C 100%)"></div>
<div class="a" style="left:313px;top:639px;width:1px;height:9px;background:#707090"></div>
<div class="a" style="left:314px;top:640px;width:1px;height:9px;background:#FAD8BE"></div>
<div class="a" style="left:315px;top:639px;width:1px;height:9px;background:#707090"></div>
<div class="a" style="left:316px;top:640px;width:1px;height:9px;background:#FAD8BE"></div>
<div class="a" style="left:317px;top:639px;width:1px;height:9px;background:#707090"></div>
<div class="a" style="left:318px;top:640px;width:1px;height:9px;background:#FAD8BE"></div>
<div class="a" style="left:1156px;top:635px;width:17px;height:17px;border-left:1px solid #768AA0;border-top:1px solid #768AA0;background:#EDEDED"></div>
<svg class="a" style="left:1162px;top:640px" width="5" height="8"><path d="M0 0V8L5 4Z" fill="#222"/></svg>
<div class="t" style="left:69.62px;top:667.99px;font-size:13.6px;color:#222;font-weight:bold;transform:scaleX(1.0861);transform-origin:0.88px 0;">Items</div>
<div class="a" style="left:120px;top:661px;width:100px;height:24px;background:#EBEBEB;border:1px solid #8A8A8A"></div>
<div class="t" style="left:234.52px;top:667.99px;font-size:13.6px;color:#222;font-weight:bold;transform:scaleX(1.0648);transform-origin:0.88px 0;">Labor</div>
<div class="a" style="left:287px;top:661px;width:100px;height:24px;background:#EBEBEB;border:1px solid #8A8A8A"></div>
<div class="t" style="left:445.79px;top:667.99px;font-size:13.6px;color:#222;font-weight:bold;transform:scaleX(1.0564);transform-origin:0.41px 0;">Sub Total</div>
<div class="a" style="left:525px;top:661px;width:100px;height:24px;background:#EBEBEB;border:1px solid #8A8A8A"></div>
<div class="t" style="left:635.96px;top:667.99px;font-size:13.6px;color:#222;font-weight:bold;transform:scaleX(0.9984);transform-origin:0.14px 0;">Tax</div>
<div class="a" style="left:670px;top:661px;width:100px;height:24px;background:#EBEBEB;border:1px solid #8A8A8A"></div>
<div class="a" style="left:813px;top:661px;width:89px;height:23px;border:1px solid #B8B8B8;background:#fff"></div>
<div class="t" style="left:842.46px;top:667.99px;font-size:13.6px;color:#222;font-weight:bold;transform:scaleX(1.0363);transform-origin:0.14px 0;">Total</div>
<div class="a" style="left:906px;top:661px;width:100px;height:24px;background:#EBEBEB;border:1px solid #8A8A8A"></div>
<div class="t" style="left:906.86px;top:665.99px;font-size:13.6px;color:#111;font-weight:bold;transform:scaleX(1.0606);transform-origin:0.54px 0;">0.00</div>
<div class="a" style="left:9px;top:695px;width:1170px;height:24px;background:#fff;border:2px solid #7C7C7C;border-right:1px solid #BDBDBD;border-bottom:1px solid #BDBDBD;border-left-width:1px"></div>
</body></html>
